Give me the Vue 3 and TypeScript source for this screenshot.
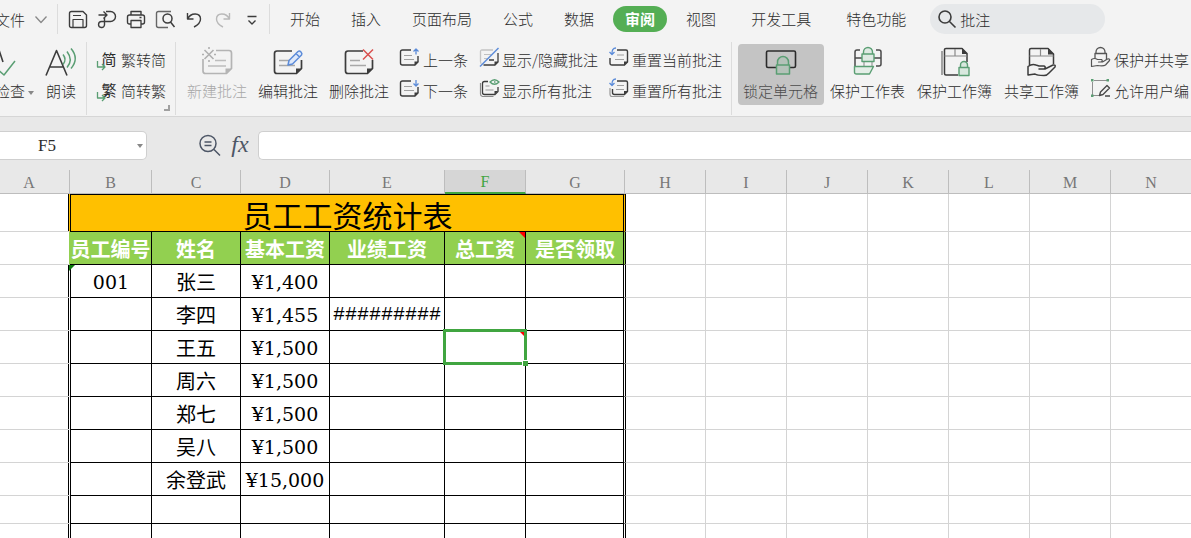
<script setup lang="ts">
import { h, ref, type FunctionalComponent } from 'vue'

interface Part {
  d: string
  c?: string
  w?: number
  fill?: string
}

const INK = '#3c3c3c'
const BLUE = '#5b8bd9'
const GREEN = '#5a9e73'

const note = (c: string): Part[] => [
  { d: 'M11 1H2.500q-2 0-2 2v11q0 2 2 2h12.500l3-3V7', c, w: 1.4 },
  { d: 'M4 6.500h8M4 10.500h10', c: '#a0a0a0', w: 1.2 },
  { d: 'M14.500 16.500v-4h4z', c: 'none', fill: c },
]
const bigNote = (c: string): Part[] => [
  { d: 'M20 5H5q-2.500 0-2.500 2.500V25q0 2.500 2.500 2.500h19.500l5-5V14', c, w: 1.7 },
  { d: 'M7 14.500h10M7 19.500h16', c: '#a8a8a8', w: 1.5 },
  { d: 'M24 28v-5.500h6z', c: 'none', fill: c },
]

const icons: Record<string, Part[]> = {
  chevron: [{ d: 'M4.500 7.500l5.500 6 5.500-6', c: '#888', w: 1.3 }],
  save: [
    { d: 'M3.500 2.500h11.500l3.500 3.500v10.500q0 2-2 2h-13q-2 0-2-2V4.500q0-2 2-2z', w: 1.4 },
    { d: 'M5 6.500h8M5 18v-7.500h10V18', w: 1.2 },
  ],
  exportPdf: [
    { d: 'M1.500 6h8M6.500 2.500L10 6 6.500 9.500', w: 1.4 },
    { d: 'M9 2.500h4.500a5 5 0 0 1 0 10H4.500a3 3 0 1 0 3 3.500V9', w: 1.4 },
  ],
  print: [
    { d: 'M5 6V2.500h10V6M5 15H3.500q-2 0-2-2V8q0-2 2-2h13q2 0 2 2v5q0 2-2 2H15', w: 1.4 },
    { d: 'M5 11.500h10v7H5zM13.500 8.500h2', w: 1.3 },
  ],
  preview: [
    { d: 'M16 2.500H3.500q-2 0-2 2v12q0 2 2 2H13', w: 1.4, c: '#666' },
    { d: 'M17 9.500a4.500 4.500 0 1 1-9 0 4.500 4.500 0 1 1 9 0zM15.500 13l4 5', w: 1.5 },
  ],
  undo: [{ d: 'M3.500 4v6h6M3.500 10C7 3 16.500 3.500 16.500 10c0 3-2.500 6-6.500 8', w: 1.4 }],
  redo: [{ d: 'M16.500 4v6h-6M16.500 10C13 3 3.500 3.500 3.500 10c0 3 2.500 6 6.500 8', c: '#b9b9b9', w: 1.4 }],
  more: [{ d: 'M5.500 7.500h9M6.500 11.500l3.500 3.500 3.500-3.500', w: 1.4 }],
  search: [{ d: 'M14 8a6 6 0 1 1-12 0 6 6 0 1 1 12 0zM12.500 12.500l6 6', w: 1.6 }],
  spell: [
    { d: 'M-4 28L4 4l4 12', w: 1.6 },
    { d: 'M4 24.500l5 4.500 11-14', c: GREEN, w: 1.5 },
  ],
  read: [
    { d: 'M1 29.500L11.500 4.500 22 29.500M5 21h13', w: 1.6 },
    { d: 'M18 8.500q4 5 0 10M22 5.500q6.500 8.500 0 16M26 2.500q8.500 10 0 20', c: GREEN, w: 1.5 },
  ],
  newNote: [
    { d: 'M15 4.500h13q2.500 0 2.500 2.500v15.500l-5 5H4.500Q2 27.500 2 25V13', c: '#b4b4b4', w: 1.7 },
    { d: 'M14 14.500h11M7 20h18', c: '#bdbdbd', w: 1.5 },
    { d: 'M24.500 28v-5.500h6z', c: 'none', fill: '#b4b4b4' },
    { d: 'M3.500 4l9 9m0-9l-9 9M8 1v2M8 14v2M1 8.500h2M13 8.500h2', c: '#b0b0b0', w: 1.6 },
  ],
  editNote: [...bigNote(INK), { d: 'M16 19l1-4.500L26 5.500q1.500-1 3 .5t.5 3L20.500 18zM24 7.500l3.500 3.500', c: BLUE, w: 1.5, fill: '#dfe9fa' }],
  deleteNote: [...bigNote(INK), { d: 'M20 3.500l10 10m0-10l-10 10', c: '#d9504f', w: 1.5 }],
  prev: [...note(INK), { d: 'M16 5.500V0M13.500 2.500L16 0l2.500 2.500', c: BLUE, w: 1.3 }],
  next: [...note(INK), { d: 'M16 0v6M13.500 3.500L16 6l2.500-2.500', c: BLUE, w: 1.3 }],
  toggle: [
    { d: 'M2.500 14.500q-1 0-1-2V2.500Q1.500 1 3 1h11', c: '#c4c4c4', w: 1.3 },
    { d: 'M5 5.500h7M5 9.500h4', c: '#c0c0c0', w: 1.2 },
    { d: 'M4.500 16h11.500l3-3V4M10 11h5', w: 1.3 },
    { d: 'M15.500 16.500v-4h4z', c: 'none', fill: INK },
    { d: 'M1 17.500L19.500-1', c: BLUE, w: 1.4 },
  ],
  showAll: [
    { d: 'M1.500 3v11q0 2 2 2.500h11', c: '#8a8a8a', w: 1.2 },
    { d: 'M9 1.500H5.500q-2 0-2 2V12.500q0 2 2 2h10.500l3-3V7', w: 1.3 },
    { d: 'M6.500 6h4M6.500 10h8', c: '#999', w: 1.2 },
    { d: 'M15.500 14.500v-3.500h3.500z', c: 'none', fill: INK },
    { d: 'M11 2q4.500-4.500 9 0-4.500 4.500-9 0zM15 2h1.500', c: GREEN, w: 1.4 },
  ],
  reset: [
    { d: 'M8 1h9q1.500 0 1.500 1.500V13l-3 3H3q-2 0-2-2V9', w: 1.4 },
    { d: 'M8 6h7M6 10.500h9', c: '#a0a0a0', w: 1.2 },
    { d: 'M15 16.500v-4h4z', c: 'none', fill: INK },
    { d: 'M7-1Q2.500-1 3 5.500M.5 3L3 5.500 5.500 3', c: BLUE, w: 1.3 },
  ],
  resetAll: [
    { d: 'M1 8v6q0 2.500 2 2.500h12', c: '#999', w: 1.2 },
    { d: 'M8 1h9q1.500 0 1.500 1.500V11.500l-3 3H5.500q-2 0-2-2V9', w: 1.4 },
    { d: 'M8 5.500h7M7 9.500h8', c: '#a0a0a0', w: 1.2 },
    { d: 'M15 15v-4h4z', c: 'none', fill: INK },
    { d: 'M7-1Q2.500-1 3 5.500M.5 3L3 5.500 5.500 3', c: BLUE, w: 1.3 },
  ],
  lockCell: [
    { d: 'M11 21.500H3q-1.500 0-1.500-1.500V6.500Q1.500 5 3 5h26q1.500 0 1.500 1.500V20q0 1.500-1.500 1.500h-4', c: '#2b2b2b', w: 1.6 },
    { d: 'M12.500 19v-3a5 5 0 0 1 11 0V19M11.500 19h13v9h-13z', c: GREEN, w: 1.5, fill: '#b4c2b9' },
  ],
  lockSheet: [
    { d: 'M8 4H5Q3 4 3 6v14M24 4h3q2 0 2 2v12q0 2-2 2h-3M3 12h7M22 12h7', c: '#4a4a4a', w: 1.5 },
    { d: 'M12 16v4M20 16v4', c: '#999', w: 1.2 },
    { d: 'M2.500 20.500h19l-4 7.500h-13q-2 0-2-2z', c: GREEN, w: 1.4, fill: '#e4eee7' },
    { d: 'M11.500 8V6a4.500 4.500 0 0 1 9 0v2M10 8h12v7.500H10z', c: GREEN, w: 1.4, fill: '#dfeae3' },
  ],
  lockBook: [
    { d: 'M3 5v24', c: '#777', w: 1.3 },
    { d: 'M19 29H7q-1.500 0-1.500-1.500v-24Q5.500 2.500 7 2.500h16l5 5V16', w: 1.5 },
    { d: 'M5.500 10H28M16 3v7', c: '#8a8a8a', w: 1.2 },
    { d: 'M23 2v6h5.500z', c: 'none', fill: INK },
    { d: 'M21.500 22v-3a3.500 3.500 0 0 1 7 0v3M20 21.500h10v8H20z', c: GREEN, w: 1.4, fill: '#d8e8de' },
  ],
  shareBook: [
    { d: 'M3.500 19V4q0-1.500 1.500-1.500h17l5.500 5.500V18', w: 1.5 },
    { d: 'M3.500 10h24M14.500 3v7', c: '#8a8a8a', w: 1.2 },
    { d: 'M22 2v6.500h6z', c: 'none', fill: INK },
    { d: 'M2 20.500q4-3 8-1.500l3 1h5q2.500 1 0 3h-5 6l8-4q3-.5 2 2l-6 6q-2 2.500-5 2.500-7 0-9-1.500l-7 1z', w: 1.5, fill: '#f3f3f3' },
  ],
  lockShare: [
    { d: 'M5 4V3a4.500 4.500 0 0 1 9 0v1M4 11V4.500h11.500V11', w: 1.3, c: '#555' },
    { d: 'M.5 10.500q3-2 6 0h4q2 1.500-1 2.500H7.500h4l5-3q3-.5 2 1.500l-4 4.500q-2 1.500-8 .5l-6 1z', w: 1.2, c: '#555', fill: '#f3f3f3' },
  ],
  range: [
    { d: 'M1.500 2v13.500h7M3 .5h13', c: '#8f8f8f', w: 1 },
    { d: 'M0-1h2.500v2.500H0zM15.500-1H18v2.500h-2.500zM0 14.500h2.500V17H0z', c: 'none', fill: GREEN },
    { d: 'M8.500 15.500l1-3.500 6.500-6.500 2.500 2.500-6.500 6.500zM14 16h5', c: '#4a4a4a', w: 1.4 },
  ],
  arrow: [{ d: 'M1.500 1v6h7M6 4l3 3-3 3', c: GREEN, w: 1.3 }],
  zoomOut: [
    { d: 'M17 8.500a8 8 0 1 1-16 0 8 8 0 1 1 16 0zM15 14.500l6 6', c: '#4d5666', w: 1.5 },
    { d: 'M5.500 7h7M5.500 10.500h7', c: '#4d5666', w: 1.5 },
  ],
}

const Glyph: FunctionalComponent<{ name: string; size?: number }> = (props) => {
  const size = props.size ?? 20
  return h(
    'svg',
    { width: size, height: size, viewBox: `0 0 ${size} ${size}`, 'aria-hidden': 'true' },
    icons[props.name].map((p) =>
      h('path', {
        d: p.d,
        fill: p.fill ?? 'none',
        stroke: p.c ?? INK,
        'stroke-width': p.w ?? 1.4,
        'stroke-linejoin': 'round',
      }),
    ),
  )
}
Glyph.props = ['name', 'size']

const quick = [
  { icon: 'save', label: '保存' },
  { icon: 'exportPdf', label: '输出' },
  { icon: 'print', label: '打印' },
  { icon: 'preview', label: '预览' },
  { icon: 'undo', label: '撤销' },
  { icon: 'redo', label: '恢复' },
  { icon: 'more', label: '更多' },
]
const tabs = ['开始', '插入', '页面布局', '公式', '数据', '审阅', '视图']
const extraTabs = ['开发工具', '特色功能']
const activeTab = ref('审阅')
const query = ref('批注')
const nameBox = ref('F5')
const formula = ref('')

const noteTools = [
  { icon: 'newNote', label: '新建批注', off: true },
  { icon: 'editNote', label: '编辑批注', off: false },
  { icon: 'deleteNote', label: '删除批注', off: false },
]
const noteLists = [
  [{ icon: 'prev', label: '上一条' }, { icon: 'next', label: '下一条' }],
  [{ icon: 'toggle', label: '显示/隐藏批注' }, { icon: 'showAll', label: '显示所有批注' }],
  [{ icon: 'reset', label: '重置当前批注' }, { icon: 'resetAll', label: '重置所有批注' }],
]
const lockTools = [
  { icon: 'lockSheet', label: '保护工作表' },
  { icon: 'lockBook', label: '保护工作簿' },
  { icon: 'shareBook', label: '共享工作簿' },
]
const shareTools = [
  { icon: 'lockShare', label: '保护并共享' },
  { icon: 'range', label: '允许用户编' },
]

const columns = 'ABCDEFGHIJKLMN'.split('')
const outer = columns.slice(8)
const heads = ['员工编号', '姓名', '基本工资', '业绩工资', '总工资', '是否领取']
const rows: string[][] = [
  ['001', '张三', '¥1,400', '', '', ''],
  ['', '李四', '¥1,455', '#########', '', ''],
  ['', '王五', '¥1,500', '', '', ''],
  ['', '周六', '¥1,500', '', '', ''],
  ['', '郑七', '¥1,500', '', '', ''],
  ['', '吴八', '¥1,500', '', '', ''],
  ['', '余登武', '¥15,000', '', '', ''],
  ['', '', '', '', '', ''],
  ['', '', '', '', '', ''],
]
const kinds = ['num', 'name', 'num', 'hash', '', '']
</script>

<template>
  <main class="app">
    <header class="ribbon">
      <nav class="menu">
        <button class="file">文件<Glyph name="chevron" /></button>
        <div class="quick">
          <button v-for="q in quick" :key="q.icon" :aria-label="q.label"><Glyph :name="q.icon" /></button>
        </div>
        <div class="tabs">
          <button v-for="t in tabs" :key="t" :class="{ active: t === activeTab }" @click="activeTab = t">{{ t }}</button>
        </div>
        <div class="tabs extra">
          <button v-for="t in extraTabs" :key="t" :class="{ active: t === activeTab }" @click="activeTab = t">{{ t }}</button>
        </div>
        <label class="search"><Glyph name="search" /><input v-model="query" aria-label="搜索" /></label>
      </nav>

      <div class="tools">
        <section class="group proof">
          <button class="big check"><Glyph name="spell" :size="32" /><span>检查<i class="caret"></i></span></button>
          <button class="big"><Glyph name="read" :size="32" /><span>朗读</span></button>
        </section>
        <section class="group convert">
          <div class="list">
            <button><span class="char">简<Glyph name="arrow" :size="12" /></span>繁转简</button>
            <button><span class="char">繁<Glyph name="arrow" :size="12" /></span>简转繁</button>
          </div>
          <i class="corner"></i>
        </section>
        <section class="group notes">
          <button v-for="t in noteTools" :key="t.icon" class="big" :disabled="t.off"><Glyph :name="t.icon" :size="32" /><span>{{ t.label }}</span></button>
          <div v-for="(l, i) in noteLists" :key="i" class="list">
            <button v-for="t in l" :key="t.icon"><Glyph :name="t.icon" />{{ t.label }}</button>
          </div>
        </section>
        <section class="group protect">
          <button class="big pressed" aria-pressed="true"><Glyph name="lockCell" :size="32" /><span>锁定单元格</span></button>
          <div class="locks">
            <button v-for="t in lockTools" :key="t.icon" class="big"><Glyph :name="t.icon" :size="32" /><span>{{ t.label }}</span></button>
            <div class="list">
              <button v-for="t in shareTools" :key="t.icon"><Glyph :name="t.icon" />{{ t.label }}</button>
            </div>
          </div>
        </section>
      </div>
    </header>

    <div class="formula">
      <div class="namebox">
        <input v-model="nameBox" aria-label="名称框" />
        <button aria-label="选择名称"><i class="caret"></i></button>
      </div>
      <button class="look" aria-label="浏览公式"><Glyph name="zoomOut" :size="22" /></button>
      <button class="fx">fx</button>
      <input v-model="formula" class="entry" aria-label="编辑栏" />
    </div>

    <div class="sheet">
      <table>
        <colgroup>
          <col v-for="c in columns" :key="c" :class="'col-' + c" />
        </colgroup>
        <thead>
          <tr>
            <th v-for="c in columns" :key="c" scope="col" :class="{ current: c === 'F' }">{{ c }}</th>
          </tr>
        </thead>
        <tbody>
          <tr class="title">
            <td class="before"></td>
            <td class="caption first last" colspan="6">员工工资统计表</td>
            <td class="after"></td>
            <td v-for="c in outer" :key="c"></td>
          </tr>
          <tr class="heads">
            <td class="before"></td>
            <td v-for="(t, i) in heads" :key="t" class="head" :class="{ last: i === 5 }">{{ t }}<i v-if="i === 4" class="remark"></i></td>
            <td class="after"></td>
            <td v-for="c in outer" :key="c"></td>
          </tr>
          <tr v-for="(r, n) in rows" :key="n" :class="{ short: n > 6 }">
            <td class="before"></td>
            <td v-for="(v, i) in r" :key="i" class="cell" :class="[kinds[i], { first: i === 0, last: i === 5 }]">
              {{ v }}
              <i v-if="n === 0 && i === 0" class="flag"></i>
              <template v-if="n === 2 && i === 4">
                <i class="remark"></i>
                <span class="selection"><i class="handle"></i></span>
              </template>
            </td>
            <td class="after"></td>
            <td v-for="c in outer" :key="c"></td>
          </tr>
        </tbody>
      </table>
    </div>
  </main>
</template>

<style>
body {
  background: #fff;
  overflow: hidden;
}
</style>

<style scoped>
.app {
  height: 100vh;
  overflow: hidden;
  display: flex;
  flex-direction: column;
  font-family: 'Noto Sans CJK SC', sans-serif;
  font-size: 15px;
  font-weight: 300;
  color: #2c2c2c;
}
button,
input {
  font: inherit;
  color: inherit;
  border: 0;
  padding: 0;
  background: none;
  white-space: nowrap;
}
svg {
  display: block;
  flex: none;
  overflow: visible;
}
.ribbon {
  flex: none;
  background: #f3f3f3;
  border-bottom: 1px solid #d6d6d6;
}
.menu {
  display: flex;
  align-items: center;
  height: 38px;
  white-space: nowrap;
}
.menu > * {
  flex: none;
}
.file {
  display: flex;
  align-items: center;
  gap: 6px;
  margin-left: -5px;
}
.quick {
  display: flex;
  align-items: center;
  gap: 9px;
  height: 30px;
  margin-left: 6px;
  padding: 0 7px 0 10px;
  border: solid #dcdcdc;
  border-width: 0 1px;
}
.quick button {
  width: 20px;
}
.tabs {
  display: flex;
  gap: 31px;
  margin-left: 20px;
}
.tabs.extra {
  gap: 35px;
  margin-left: 35px;
}
.tabs button {
  line-height: 26px;
}
.tabs .active {
  margin: 0 -12px;
  padding: 0 12px;
  border-radius: 13px;
  background: #54ae54;
  color: #fff;
  font-weight: 700;
}
.search {
  display: flex;
  align-items: center;
  gap: 3px;
  box-sizing: border-box;
  width: 175px;
  height: 30px;
  margin-left: 24px;
  padding-left: 7px;
  border-radius: 15px;
  background: #e6e8ea;
}
.search input {
  flex: 1;
  min-width: 0;
  outline: 0;
}
.tools {
  display: flex;
  height: 78px;
}
.group {
  display: flex;
  align-items: flex-start;
  flex: none;
  box-sizing: border-box;
  height: 73px;
  margin-top: 4px;
  padding-top: 2px;
  border-right: 1px solid #dcdcdc;
}
.big {
  display: flex;
  flex-direction: column;
  align-items: center;
  flex: none;
  padding-top: 2px;
  height: 61px;
}
.big span {
  line-height: 26px;
}
.big:disabled {
  color: #a8a8a8;
}
.list {
  display: flex;
  flex-direction: column;
  gap: 1px;
  flex: none;
}
.list button {
  display: flex;
  align-items: center;
  gap: 3px;
  height: 30px;
}
.caret {
  display: inline-block;
  border: solid transparent;
  border-width: 4px 3px 0;
  border-top-color: #888;
  margin-left: 3px;
  vertical-align: middle;
}
.proof {
  gap: 11px;
  padding-right: 9px;
}
.check {
  align-items: flex-start;
  margin-left: -5px;
}
.convert {
  position: relative;
  padding-left: 14px;
  padding-right: 9px;
}
.convert .list button {
  gap: 4px;
}
.char {
  position: relative;
  width: 16px;
  line-height: 20px;
  font-weight: 400;
}
.char svg {
  position: absolute;
  left: -5px;
  bottom: -3px;
}
.corner {
  position: absolute;
  right: 5px;
  bottom: 4px;
  width: 4px;
  height: 4px;
  border: solid #a0a0a0;
  border-width: 0 2px 2px 0;
}
.notes {
  gap: 11px;
  padding-left: 11px;
  padding-right: 9px;
}
.protect {
  border: 0;
  padding-left: 6px;
  gap: 6px;
}
.pressed {
  padding-left: 5px;
  padding-right: 6px;
  border-radius: 4px;
  background: #c4c4c4;
  color: #4c4c4c;
}
.locks {
  display: flex;
  gap: 12px;
}
.formula {
  flex: none;
  display: flex;
  align-items: center;
  box-sizing: border-box;
  height: 53px;
  padding-top: 4px;
  background: #e8e8e8;
}
.namebox {
  display: flex;
  align-items: center;
  box-sizing: border-box;
  width: 147px;
  height: 29px;
  border: 1px solid #cfcfcf;
  border-left: 0;
  border-radius: 0 5px 5px 0;
  background: #fff;
}
.namebox input {
  flex: 1;
  min-width: 0;
  padding-left: 38px;
  outline: 0;
  font: 17px 'Liberation Serif', serif;
}
.namebox button {
  display: flex;
  padding-right: 3px;
}
.look {
  margin-left: 52px;
}
.fx {
  margin-left: 9px;
  width: 20px;
  font: italic 24px 'Liberation Serif', serif;
  line-height: 24px;
  padding-bottom: 4px;
  color: #4d5666;
}
.entry {
  flex: 1;
  min-width: 0;
  box-sizing: border-box;
  height: 29px;
  margin-left: 8px;
  padding: 0 8px;
  border: 1px solid #cfcfcf;
  border-right: 0;
  border-radius: 5px 0 0 5px;
  background: #fff;
  outline: 0;
}
.sheet {
  flex: 1;
  min-height: 0;
  overflow: hidden;
}
table {
  table-layout: fixed;
  width: 1192px;
  border-collapse: separate;
  border-spacing: 0;
}
col {
  width: 81px;
}
.col-A {
  width: 70px;
}
.col-B {
  width: 82px;
}
.col-C,
.col-D {
  width: 89px;
}
.col-E {
  width: 115px;
}
.col-G {
  width: 99px;
}
th,
td {
  position: relative;
  box-sizing: border-box;
  padding: 0;
  text-align: center;
  vertical-align: middle;
  white-space: nowrap;
  border: solid #d4d4d4;
  border-width: 0 1px 1px 0;
}
th {
  height: 24px;
  padding-top: 3px;
  background: #e8e8e8;
  border-color: #bdbdbd;
  font: 16px 'Liberation Serif', serif;
  line-height: 20px;
  color: #777;
}
th:first-child {
  padding-right: 11px;
}
th.current {
  background: #d6d6d6;
  border-bottom: 2px solid #40a540;
  padding-top: 2px;
  color: #40a540;
}
td {
  height: 33px;
  padding-top: 2px;
  font-size: 20px;
  line-height: 28px;
  color: #000;
}
.title td {
  height: 38px;
}
.short td {
  height: 28px;
  line-height: 20px;
}
td.before {
  border-right-color: #fff;
  box-shadow: inset -1px 0 #000;
}
.title .before {
  border-right-color: #ffc000;
}
.heads .before {
  border-right-color: #92d050;
  box-shadow: none;
}
td.after {
  border-left: 1px solid #000;
}
td.caption {
  border: 1px solid #000;
  background: #ffc000;
  font-size: 30px;
  font-weight: 400;
  line-height: 34px;
}
td.head {
  background: #92d050;
  border-color: #000;
  color: #fff;
  font-weight: 700;
}
td.cell {
  border-color: #000;
}
td.first {
  border-left: 1px solid #000;
}
td.last {
  border-right-color: #fff;
  box-shadow: inset -1px 0 #000;
}
td.caption.last {
  border-right-color: #ffc000;
}
td.head.last {
  border-right-color: #92d050;
}
.name {
  font-weight: 400;
}
.num {
  font-family: 'DejaVu Serif', serif;
  font-size: 19px;
  font-weight: 400;
}
.hash {
  font-family: 'Liberation Mono', monospace;
}
.flag,
.remark {
  position: absolute;
  top: 0;
  width: 6px;
  height: 6px;
}
.flag {
  left: -2px;
  background: #0b7a0b;
  clip-path: polygon(0 0, 100% 0, 0 100%);
}
.remark {
  right: 0;
  background: #f00;
  clip-path: polygon(0 0, 100% 0, 100% 100%);
}
.selection {
  position: absolute;
  inset: -2px;
  border: 3px solid #40a540;
  z-index: 1;
}
.handle {
  position: absolute;
  right: -4px;
  bottom: -4px;
  width: 5px;
  height: 5px;
  border: solid #fff;
  border-width: 1px 0 0 1px;
  background: #40a540;
}
</style>
